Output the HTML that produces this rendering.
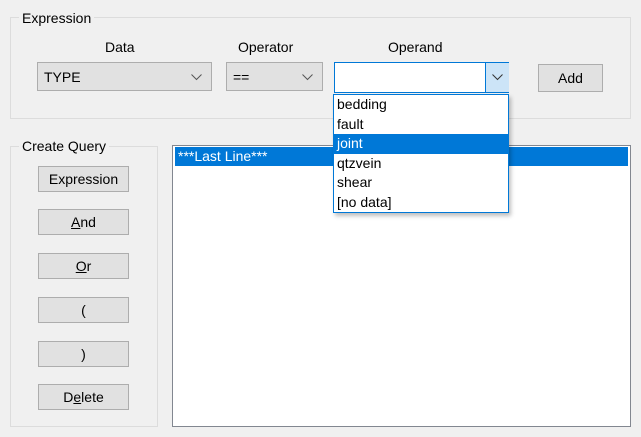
<!DOCTYPE html>
<html><head><style>
body{margin:0;width:641px;height:437px;background:#f0f0f0;font-family:"Liberation Sans",sans-serif;font-size:14px;color:#000;position:relative;overflow:hidden}
.a{position:absolute}
.grp{position:absolute;border:1px solid #dcdcdc}
.lg{position:absolute;background:#f0f0f0;padding:0 3px;line-height:16px}
.btn{position:absolute;left:38px;width:89px;height:24px;border:1px solid #adadad;background:#e1e1e1;text-align:center;line-height:24px}
.combo{position:absolute;border:1px solid #adadad;background:#e1e1e1;height:29px;line-height:29px;box-sizing:border-box;padding-left:6px}
.chev{position:absolute;right:9px;top:11px}
.it{height:19.6px;line-height:19.6px;padding-left:3px}
</style></head><body>
<div class="grp" style="left:10px;top:17px;width:619px;height:100px"></div>
<div class="lg" style="left:19px;top:10px">Expression</div>
<div class="a" style="left:105px;top:39px">Data</div>
<div class="a" style="left:238px;top:39px">Operator</div>
<div class="a" style="left:388px;top:39px">Operand</div>
<div class="combo" style="left:37px;top:62px;width:175px">TYPE<svg class="chev" width="11" height="7"><path d="M0.5 0.5L5.5 5.5L10.5 0.5" stroke="#555" fill="none"/></svg></div>
<div class="combo" style="left:226px;top:62px;width:97px">==<svg class="chev" width="11" height="7"><path d="M0.5 0.5L5.5 5.5L10.5 0.5" stroke="#555" fill="none"/></svg></div>
<div class="a" style="left:334px;top:62px;width:175px;height:31px;box-sizing:border-box;border:1px solid #0078d7;background:#fff"></div>
<div class="a" style="left:485px;top:63px;width:23px;height:29px;background:#cce4f7;border-left:1px solid #0078d7"><svg style="position:absolute;left:6px;top:11px" width="11" height="7"><path d="M0.5 0.5L5.5 5.5L10.5 0.5" stroke="#333" fill="none"/></svg></div>
<div class="a" style="left:538px;top:64px;width:63px;height:26px;border:1px solid #adadad;background:#e1e1e1;text-align:center;line-height:26px">Add</div>
<div class="grp" style="left:10px;top:146px;width:146px;height:279px"></div>
<div class="lg" style="left:19px;top:138px">Create Query</div>
<div class="btn" style="top:166px">Expression</div>
<div class="btn" style="top:209px"><u>A</u>nd</div>
<div class="btn" style="top:253px"><u>O</u>r</div>
<div class="btn" style="top:297px">(</div>
<div class="btn" style="top:341px">)</div>
<div class="btn" style="top:384px">D<u>e</u>lete</div>
<div class="a" style="left:172px;top:145px;width:457px;height:280px;border:1px solid #828790;background:#fff"></div>
<div class="a" style="left:175px;top:147px;width:453px;height:19px;background:#0078d7;color:#fff;line-height:19px;padding-left:3px;box-sizing:border-box">***Last Line***</div>
<div class="a" style="z-index:10;left:333px;top:94px;width:174px;height:117px;border:1px solid #0078d7;background:#fff;box-shadow:2px 3px 4px rgba(0,0,0,.25)">
<div class="it">bedding</div><div class="it">fault</div><div class="it" style="background:#0078d7;color:#fff">joint</div><div class="it">qtzvein</div><div class="it">shear</div><div class="it">[no data]</div></div>
</body></html>
